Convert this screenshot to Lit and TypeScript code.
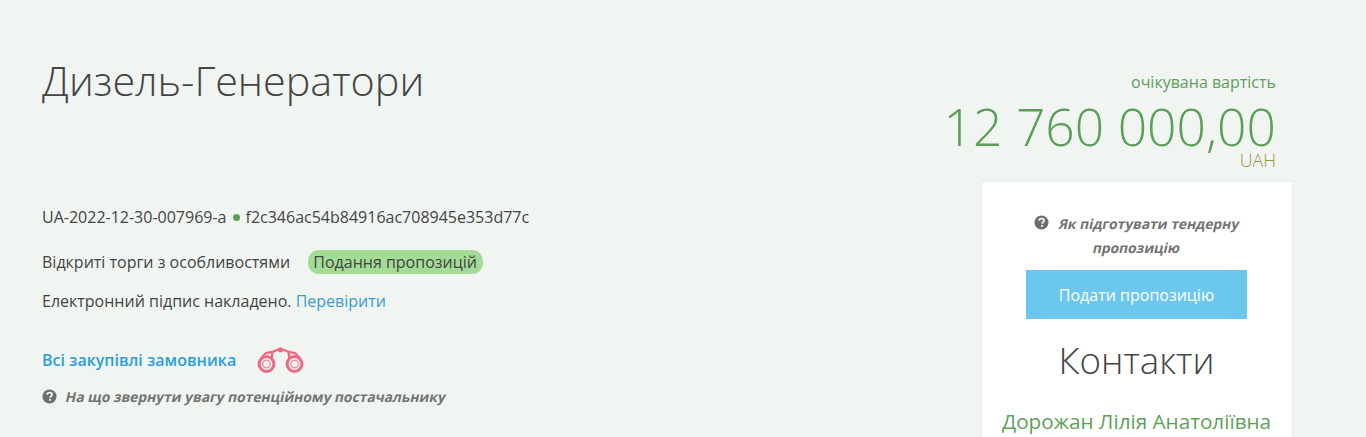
import { LitElement, html, css } from 'lit'
import { customElement } from 'lit/decorators.js'

const help = html`<svg class="help" viewBox="0 0 16 16" width="15" height="15"><circle cx="8" cy="8" r="7.5" fill="#6d6d6d"/><path d="M5.4 6.2c.1-1.500 1.100-2.400 2.700-2.400 1.500 0 2.600.9 2.600 2.100 0 1.800-2 1.700-2 3.300" fill="none" stroke="#f1f5f2" stroke-width="1.9"/><rect x="7.6" y="10.6" width="2" height="2" fill="#f1f5f2"/></svg>`

@customElement('app-root')
export class AppRoot extends LitElement {
  render() {
    return html`
      <div class="page">
        <div class="left">
          <h1>Дизель-Генератори</h1>
          <div class="ids">UA-2022-12-30-007969-a<span class="dot"></span>f2c346ac54b84916ac708945e353d77c</div>
          <div class="kind">Відкриті торги з особливостями <span class="badge">Подання пропозицій</span></div>
          <div class="sign">Електронний підпис накладено. <a>Перевірити</a></div>
          <div class="all"><a>Всі закупівлі замовника</a>
            <svg class="bino" viewBox="0 0 47 26" width="47" height="26" fill="none" stroke="#ec6a84">
              <circle cx="9.5" cy="17" r="7.4" stroke-width="3"/><circle cx="9.5" cy="17" r="3.800" stroke-width="1.400" stroke-opacity=".7"/>
              <circle cx="37.5" cy="17" r="7.4" stroke-width="3"/><circle cx="37.5" cy="17" r="3.800" stroke-width="1.400" stroke-opacity=".7"/>
              <path d="M4 11 9 6l6-1 6-2.500M43 11l-5-5-6-1-6-2.500M14.500 11l1-5M32.500 11l-1-5" stroke-width="2.400"/>
              <circle cx="23.500" cy="2.800" r="2.600" fill="#ec6a84" stroke="none"/>
            </svg>
          </div>
          <div class="hint">${help}<span class="slant">На що звернути увагу потенційному постачальнику</span></div>
        </div>
        <div class="right">
          <div class="label">очікувана вартість</div>
          <div class="amount">12 760 000,00</div>
          <div class="cur">UAH</div>
          <div class="card">
            <div class="how">
              <div>${help}<span class="slant">Як підготувати тендерну</span></div>
              <div><span class="slant">пропозицію</span></div>
            </div>
            <button>Подати пропозицію</button>
            <h2>Контакти</h2>
            <div class="person">Дорожан Лілія Анатоліївна</div>
          </div>
        </div>
      </div>
    `
  }

  static styles = css`
    :host {
      display: block;
      height: 437px;
      overflow: hidden;
      background: #f1f5f2;
      font-family: 'Open Sans', sans-serif;
      color: #444;
    }
    .page {
      display: flex;
      justify-content: space-between;
      padding: 0 73px 0 42px;
    }
    h1 {
      margin: 52px 0 0;
      font-size: 41.3px;
      line-height: 57px;
      font-weight: 300;
      color: #444;
    }
    .ids { margin-top: 97px; font-size: 16px; line-height: 22px; display: flex; align-items: center; }
    .dot {
      width: 7px;
      height: 7px;
      margin: 1px 6px 0 6px;
      border-radius: 50%;
      background: #5a9e58;
    }
    .kind { margin-top: 22px; font-size: 16px; line-height: 24px; }
    .badge {
      margin-left: 14px;
      padding: 1px 6px 1px 5px;
      background: #a3dc95;
      border-radius: 11px;
    }
    .sign { margin-top: 15px; font-size: 16px; line-height: 24px; }
    a { color: #3d9bd0; }
    .all { display: flex; align-items: center; gap: 21px; margin-top: 33px; font-size: 16px; font-weight: 600; height: 28px; }
    .all a { color: #2b9fd8; }
    .hint { display: flex; align-items: center; gap: 9px; margin-top: 13px; font-size: 13.8px; font-weight: 700; color: #737373; }
    .slant { display: inline-block; transform: skewX(-12deg); }
    .right { width: 348px; display: flex; flex-direction: column; align-items: flex-end; }
    .label { margin: 71px 17px 0 0; font-size: 16px; line-height: 22px; color: #5f9f5a; }
    .amount { margin: 5px 17px 0 0; font-size: 51.6px; line-height: 56px; font-weight: 300; color: #5a9e58; white-space: nowrap; }
    .cur { margin: -4px 17px 0 0; font-size: 17.8px; line-height: 20px; font-weight: 300; color: #95953f; }
    .card {
      box-sizing: border-box;
      width: 312px;
      height: 280px;
      margin-top: 11px;
      background: #fff;
      border: 1px solid #e8ecea;
      padding: 30px 21px 0 20px;
      text-align: center;
    }
    .how { font-size: 13.8px; font-weight: 700; color: #737373; line-height: 24px; }
    .how .help { margin-right: 10px; vertical-align: -1px; }
    button {
      display: block;
      margin: 10px auto 0;
      width: 221px;
      height: 49px;
      border: 0;
      background: #6bc7ed;
      color: #fff;
      font: 16px 'Open Sans', sans-serif;
    }
    h2 { margin: 17px 0 0; font-size: 36.7px; line-height: 49px; font-weight: 300; color: #444; }
    .person { margin-top: 22px; font-size: 20.7px; line-height: 28px; color: #5f9f5a; white-space: nowrap; }
  `
}

declare global {
  interface HTMLElementTagNameMap {
    'app-root': AppRoot
  }
}
